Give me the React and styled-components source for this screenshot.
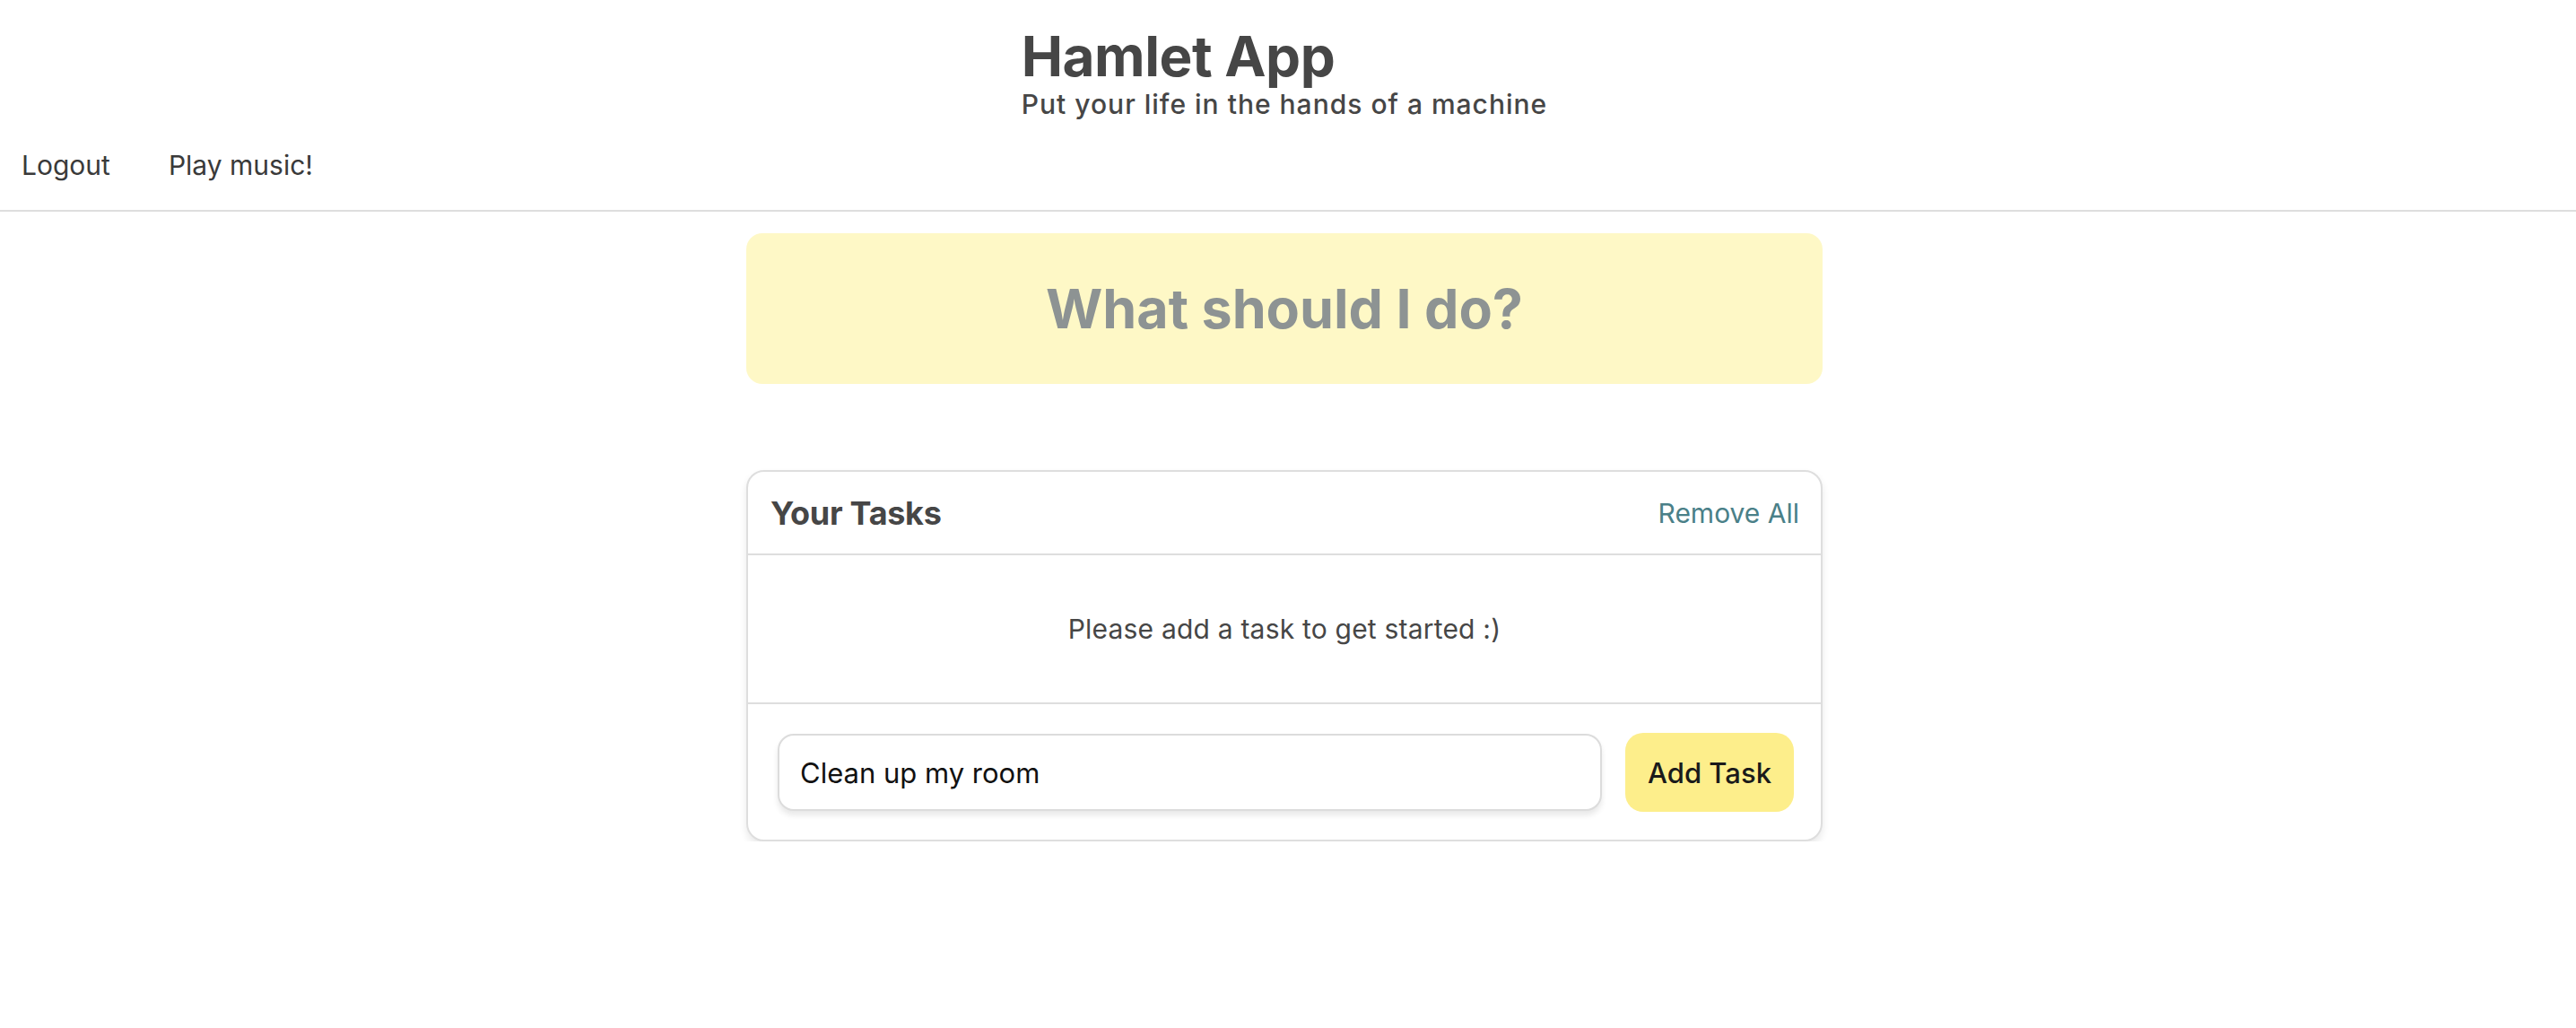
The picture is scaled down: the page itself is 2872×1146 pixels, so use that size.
import React from "react";
import styled, { createGlobalStyle } from "styled-components";

const Global = createGlobalStyle`
  html, body { margin: 0; padding: 0; background: #fff; }
  body { font-family: Inter, "Noto Sans", sans-serif; color: #464646; }
  * { box-sizing: border-box; }
`;

const Header = styled.header`
  border-bottom: 2px solid #dedede;
  padding-top: 31px;
  padding-bottom: 35px;
`;

const Brand = styled.div`
  width: fit-content;
  margin: 0 auto;
  transform: translateX(-4px);
`;

const Title = styled.h1`
  margin: 0;
  font-size: 62px;
  line-height: 64px;
  font-weight: 700;
  color: #464646;
  letter-spacing: -0.5px;
`;

const Subtitle = styled.h2`
  margin: 6px 0 0;
  font-size: 30px;
  line-height: 30px;
  font-weight: 500;
  letter-spacing: 1px;
  color: #464646;
`;

const Nav = styled.nav`
  display: flex;
  gap: 65px;
  padding-left: 24px;
  margin-top: 38px;
`;

const NavLink = styled.a`
  font-size: 30px;
  line-height: 30px;
  color: #3a3a3a;
  text-decoration: none;
  cursor: pointer;
`;

const Main = styled.main`
  width: 1200px;
  margin: 24px 0 0 calc(50% - 604px);
  display: flex;
  flex-direction: column;
  gap: 96px;
`;

const Prompt = styled.button`
  height: 168px;
  border: none;
  border-radius: 18px;
  background: #fef8c6;
  display: flex;
  align-items: center;
  justify-content: center;
  font-family: Inter, sans-serif;
  font-size: 61px;
  font-weight: 700;
  color: #8d9393;
  cursor: pointer;
`;

const Card = styled.section`
  border: 2px solid #dedede;
  border-radius: 20px;
  background: #fff;
  box-shadow: 0 5px 8px rgba(0, 0, 0, 0.09);
  overflow: hidden;
`;

const CardHead = styled.div`
  display: flex;
  align-items: center;
  justify-content: space-between;
  height: 93px;
  padding: 0 24px 0 25px;
  border-bottom: 2px solid #dedede;
`;

const CardTitle = styled.h3`
  margin: 0;
  font-size: 36px;
  font-weight: 700;
  color: #464646;
  letter-spacing: -0.3px;
`;

const LinkButton = styled.button`
  border: none;
  background: none;
  padding: 0;
  font-family: Inter, sans-serif;
  font-size: 30px;
  color: #4a8088;
  cursor: pointer;
`;

const CardBody = styled.div`
  height: 166px;
  display: flex;
  align-items: center;
  justify-content: center;
  border-bottom: 2px solid #dedede;
`;

const Empty = styled.p`
  margin: 0;
  font-size: 30px;
  letter-spacing: 0.2px;
  color: #464646;
`;

const Form = styled.form`
  display: flex;
  align-items: center;
  gap: 26px;
  padding: 32px 30px 31px 33px;
`;

const Input = styled.input`
  flex: 1;
  height: 86px;
  border: 2px solid #dcdcdc;
  border-radius: 18px;
  padding: 0 23px;
  font-family: Inter, sans-serif;
  font-size: 31px;
  color: #111;
  box-shadow: 0 5px 6px rgba(0, 0, 0, 0.09);
  outline: none;
`;

const AddButton = styled.button`
  height: 88px;
  width: 188px;
  border: none;
  border-radius: 20px;
  background: #fdee8b;
  font-family: Inter, sans-serif;
  font-size: 31px;
  font-weight: 500;
  color: #1a1a1a;
  cursor: pointer;
`;

export default function App() {
  return (
    <>
      <Global />
      <Header>
        <Brand>
          <Title>Hamlet App</Title>
          <Subtitle>Put your life in the hands of a machine</Subtitle>
        </Brand>
        <Nav>
          <NavLink>Logout</NavLink>
          <NavLink>Play music!</NavLink>
        </Nav>
      </Header>
      <Main>
        <Prompt>What should I do?</Prompt>
        <Card>
          <CardHead>
            <CardTitle>Your Tasks</CardTitle>
            <LinkButton>Remove All</LinkButton>
          </CardHead>
          <CardBody>
            <Empty>Please add a task to get started :)</Empty>
          </CardBody>
          <Form onSubmit={(e) => e.preventDefault()}>
            <Input defaultValue="Clean up my room" />
            <AddButton type="submit">Add Task</AddButton>
          </Form>
        </Card>
      </Main>
    </>
  );
}
